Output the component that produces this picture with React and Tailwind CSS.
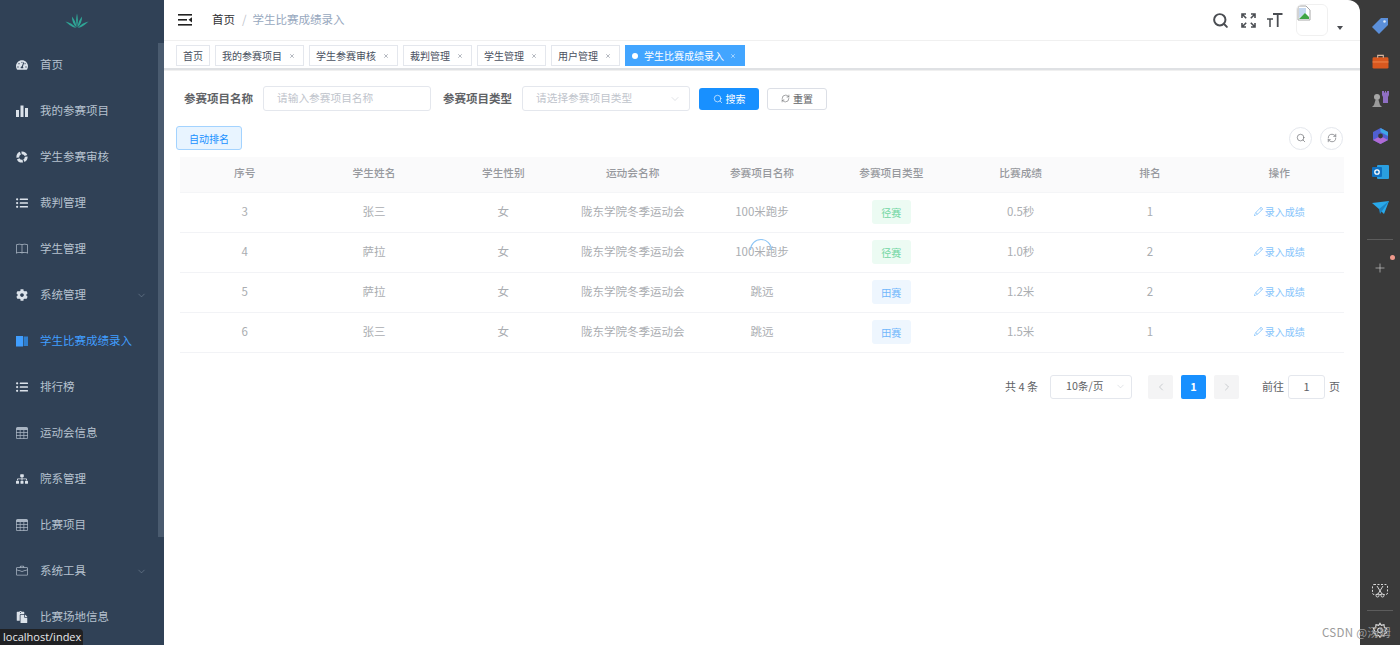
import React from "react";
import { Search, RefreshCw, ChevronDown, ChevronLeft, ChevronRight, Plus, X } from "lucide-react";
import { FaTachometerAlt, FaListUl, FaCog, FaSitemap, FaPaste } from "react-icons/fa";
import { BsBook, BsTable, BsBriefcase, BsPencil } from "react-icons/bs";

const Bars = (p) => (
  <svg {...p} viewBox="0 0 12 12" fill="currentColor"><rect x="0" y="5" width="3" height="7" /><rect x="4.5" y="0.5" width="3" height="11.5" /><rect x="9" y="3" width="3" height="9" /></svg>
);
const Ring = (p) => (
  <svg {...p} viewBox="0 0 12 12" fill="none" stroke="currentColor"><circle cx="6" cy="6" r="4.2" strokeWidth="2.8" strokeDasharray="5.4 1.2" strokeDashoffset="1" /></svg>
);
const ActiveBook = (p) => (
  <svg {...p} viewBox="0 0 12 12"><rect x="0" y="1" width="7" height="10.5" fill="#409eff" /><rect x="7.6" y="1.5" width="4.4" height="9.5" fill="#2f7fd0" /></svg>
);

const menu = [
  ["首页", FaTachometerAlt],
  ["我的参赛项目", Bars],
  ["学生参赛审核", Ring],
  ["裁判管理", FaListUl],
  ["学生管理", BsBook, false, false, true],
  ["系统管理", FaCog, true],
  ["学生比赛成绩录入", ActiveBook, false, true],
  ["排行榜", FaListUl],
  ["运动会信息", BsTable, false, false, true],
  ["院系管理", FaSitemap],
  ["比赛项目", BsTable, false, false, true],
  ["系统工具", BsBriefcase, true, false, true],
  ["比赛场地信息", FaPaste],
];

const tags = ["我的参赛项目", "学生参赛审核", "裁判管理", "学生管理", "用户管理"];
const heads = ["序号", "学生姓名", "学生性别", "运动会名称", "参赛项目名称", "参赛项目类型", "比赛成绩", "排名", "操作"];
const rows = [
  ["3", "张三", "100米跑步", "径赛", "0.5秒", "1"],
  ["4", "萨拉", "100米跑步", "径赛", "1.0秒", "2"],
  ["5", "萨拉", "跳远", "田赛", "1.2米", "2"],
  ["6", "张三", "跳远", "田赛", "1.5米", "1"],
];

function Sidebar() {
  return (
    <aside className="relative w-[164px] h-full shrink-0 bg-[#304156] overflow-hidden">
      <div className="h-[42px] flex items-center justify-center pr-[10px]">
        <svg width="24" height="16" viewBox="0 0 26 16" fill="#2fa596">
          <path d="M13 15 C11.5 9 12 4 13 0 C14 4 14.5 9 13 15Z" />
          <path d="M12.5 15 C9 12 7.5 7 7.5 3 C10 6 12 10 12.5 15Z" />
          <path d="M13.5 15 C17 12 18.5 7 18.5 3 C16 6 14 10 13.5 15Z" />
          <path d="M12 15.5 C7 14.5 3 11 0.5 8.5 C5 9.5 9.5 12 12 15.5Z" />
          <path d="M14 15.5 C19 14.5 23 11 25.5 8.5 C21 9.5 16.5 12 14 15.5Z" />
        </svg>
      </div>
      {menu.map(([label, Icon, arrow, active, dim]) => (
        <div key={label} className={`h-[46px] flex items-center pl-4 pr-4 ${active ? "text-[#409eff]" : "text-[#b6c2cf]"}`}>
          <Icon size={12} width={12} height={12} className={`w-3 h-3 shrink-0 ${active ? "text-[#409eff]" : dim ? "text-[#a9b5c3]" : "text-[#dbe2ea]"}`} />
          <span className="ml-3 text-[11.5px] leading-none whitespace-nowrap">{label}</span>
          {arrow && <ChevronDown size={11} strokeWidth={1} className="ml-auto mr-[1px] text-[#8a99ab]" />}
        </div>
      ))}
      <div className="absolute right-0 top-[43px] w-[6px] h-[494px] bg-[#4a5b6f]" />
      <div className="absolute left-0 bottom-0 h-4 w-[83px] bg-[#202124] text-[#e8eaed] text-[11px] leading-4 pl-[3px] font-['Open_Sans',sans-serif] rounded-tr-sm">localhost/index</div>
    </aside>
  );
}

function Navbar() {
  return (
    <header className="h-[41px] shrink-0 flex items-center border-b border-[#f0f0f0] pl-[14px] pr-[17px]">
      <svg width="14" height="12" viewBox="0 0 14 12" fill="#222" className="shrink-0">
        <rect x="0" y="0" width="14" height="1.6" />
        <rect x="0" y="5" width="9" height="1.6" />
        <rect x="0" y="10" width="14" height="1.6" />
        <path d="M14 3.2 L10.5 5.8 L14 8.4Z" />
      </svg>
      <span className="ml-5 text-[11.5px] text-[#303133]">首页</span>
      <span className="ml-[7px] text-[11.5px] text-[#c0c4cc]">/</span>
      <span className="ml-[6px] text-[11.5px] text-[#97a8be]">学生比赛成绩录入</span>
      <div className="ml-auto flex items-center">
        <Search size={17} strokeWidth={2.8} className="text-[#4a4d52]" />
        <svg width="15" height="15" viewBox="0 0 15 15" fill="none" stroke="#4a4d52" strokeWidth="1.6" className="ml-[12px]">
          <path d="M1 5 V1 H5 M1 1 L5.2 5.2" />
          <path d="M14 5 V1 H10 M14 1 L9.8 5.2" />
          <path d="M1 10 V14 H5 M1 14 L5.2 9.8" />
          <path d="M14 10 V14 H10 M14 14 L9.8 9.8" />
        </svg>
        <svg width="17" height="16" viewBox="0 0 17 16" className="ml-[10px] text-[#4a4d52]" stroke="currentColor" fill="none">
          <path d="M7 2 H16.5 M11.7 2 V15" strokeWidth="1.8" />
          <path d="M1 7 H7 M4 7 V15" strokeWidth="1.5" />
        </svg>
        <div className="ml-[13px] w-8 h-8 rounded-md border border-[#f0f0f0] relative overflow-hidden">
          <svg width="14" height="16" viewBox="0 0 14 16" className="absolute left-0 top-0">
            <path d="M1 1 H9 L13 5 V15 H1Z" fill="#fff" stroke="#a8a8a8" strokeWidth="1" />
            <path d="M2 3 H9 V8 L2 13Z" fill="#c5d8f0" />
            <path d="M2 14 L8 8 L12 12 V14Z" fill="#3fa544" />
          </svg>
        </div>
        <div className="ml-[9px] mt-[16px] w-0 h-0 border-x-[3px] border-x-transparent border-t-[4px] border-t-[#4a4d52]" />
      </div>
    </header>
  );
}

function Tags() {
  return (
    <div className="h-[29px] shrink-0 flex items-start gap-[5px] pl-3 pt-[4px] border-b-2 border-[#dfe1e4] shadow-[0_1px_0_#f0f0f0]">
      <div className="h-[21px] flex items-center px-[6px] border border-[#e4e7ed] text-[10px] text-[#495060]">首页</div>
      {tags.map((t) => (
        <div key={t} className="h-[21px] flex items-center pl-[6px] pr-[8px] border border-[#e4e7ed] text-[10px] text-[#495060]">
          <span>{t}</span>
          <X size={6} strokeWidth={2} className="ml-[7px] text-[#6b7280]" />
        </div>
      ))}
      <div className="h-[21px] flex items-center pl-[7px] pr-[9px] bg-[#42a5ff] text-[10px] text-white">
        <span className="w-[6px] h-[6px] rounded-full bg-white" />
        <span className="ml-[6px]">学生比赛成绩录入</span>
        <X size={6} strokeWidth={2} className="ml-[6px] text-white" />
      </div>
    </div>
  );
}

function Filters() {
  return (
    <div className="flex items-center h-[25px] pl-[20px]">
      <span className="text-[11.5px] font-semibold text-[#606266] w-[79px] whitespace-nowrap">参赛项目名称</span>
      <div className="w-[168px] h-[25px] border border-[#e4e7ed] rounded-[3px] pl-[13px] flex items-center text-[10.7px] text-[#c0c4cc]">请输入参赛项目名称</div>
      <span className="ml-3 text-[11.5px] font-semibold text-[#606266] w-[79px] whitespace-nowrap">参赛项目类型</span>
      <div className="w-[168px] h-[25px] border border-[#e4e7ed] rounded-[3px] pl-[13px] pr-[8px] flex items-center justify-between text-[10.7px] text-[#c0c4cc]">
        请选择参赛项目类型
        <ChevronDown size={12} strokeWidth={1} />
      </div>
      <button className="ml-[9px] w-[60px] h-[22px] rounded-[3px] bg-[#1890ff] text-white text-[10px] flex items-center justify-center gap-[3px]">
        <Search size={10} strokeWidth={1.5} />搜索
      </button>
      <button className="ml-2 w-[60px] h-[22px] rounded-[3px] border border-[#dcdfe6] text-[#606266] text-[10px] flex items-center justify-center gap-[3px]">
        <RefreshCw size={9} strokeWidth={1.5} />重置
      </button>
    </div>
  );
}

function Toolbar() {
  return (
    <div className="flex items-center justify-between h-6 mt-[15px] pl-3 pr-[17px]">
      <button className="w-[66px] h-6 rounded-[3px] bg-[#e8f4ff] border border-[#a3d3ff] text-[#1890ff] text-[10px]">自动排名</button>
      <div className="flex items-center gap-2">
        <span className="w-[23px] h-[23px] rounded-full border border-[#e4e7ed] flex items-center justify-center text-[#606266]"><Search size={10} strokeWidth={1.5} /></span>
        <span className="w-[23px] h-[23px] rounded-full border border-[#e4e7ed] flex items-center justify-center text-[#606266]"><RefreshCw size={10} strokeWidth={1.5} /></span>
      </div>
    </div>
  );
}

function DataTable() {
  return (
    <div className="relative mt-[7px] ml-4 mr-4">
      <table className="w-full table-fixed border-collapse">
        <thead>
          <tr className="h-[35px] bg-[#fafafb] border-b border-[#f4f5f7]">
            {heads.map((h) => (
              <th key={h} className="pb-[3px] text-[10.7px] font-medium text-[#97999e] text-center">{h}</th>
            ))}
          </tr>
        </thead>
        <tbody>
          {rows.map(([id, name, item, type, score, rank]) => (
            <tr key={id} className="h-10 border-b border-[#f2f3f6] text-[11.5px] text-[#aaadb1] text-center">
              <td>{id}</td>
              <td>{name}</td>
              <td>女</td>
              <td>陇东学院冬季运动会</td>
              <td>{item}</td>
              <td>
                <span className={`inline-flex w-[39px] h-6 items-center justify-center rounded-[3px] text-[10px] ${type === "径赛" ? "bg-[#ecfbf3] text-[#6fd6a2]" : "bg-[#eef6fe] text-[#70b7fb]"}`}>{type}</span>
              </td>
              <td>{score}</td>
              <td>{rank}</td>
              <td>
                <span className="inline-flex items-center justify-center text-[10px] text-[#86c4fb]">
                  <BsPencil size={9} className="mr-[2px]" />录入成绩
                </span>
              </td>
            </tr>
          ))}
        </tbody>
      </table>
      <svg width="26" height="26" viewBox="0 0 26 26" className="absolute left-[568px] top-[80px]" fill="none">
        <path d="M2.5 13 A10.5 10.5 0 0 1 23.5 13" stroke="#8cc5f5" strokeWidth="1.1" />
      </svg>
    </div>
  );
}

function Pager() {
  return (
    <div className="mt-[22px] pr-5 flex items-center justify-end h-6 text-[11px] text-[#606266]">
      <span>共 4 条</span>
      <div className="ml-3 w-[82px] h-6 border border-[#e4e7ed] rounded-[3px] pl-[15px] pr-[5px] flex items-center justify-between text-[10.7px]">
        10条/页
        <ChevronDown size={11} strokeWidth={1} className="text-[#c0c4cc]" />
      </div>
      <span className="ml-4 w-[25px] h-6 rounded-[2px] bg-[#f4f4f5] flex items-center justify-center text-[#b8bbc0]"><ChevronLeft size={12} strokeWidth={1.4} /></span>
      <span className="ml-2 w-[25px] h-6 rounded-[2px] bg-[#1890ff] flex items-center justify-center text-white font-bold">1</span>
      <span className="ml-2 w-[25px] h-6 rounded-[2px] bg-[#f4f4f5] flex items-center justify-center text-[#b8bbc0]"><ChevronRight size={12} strokeWidth={1.4} /></span>
      <span className="ml-[23px]">前往</span>
      <span className="ml-1 w-[37px] h-6 border border-[#e4e7ed] rounded-[3px] flex items-center justify-center">1</span>
      <span className="ml-1 w-[11px]">页</span>
    </div>
  );
}

function Rail() {
  return (
    <aside className="relative w-10 h-full shrink-0 bg-[#3a3a3a] flex flex-col items-center">
      <div className="h-[45px] mt-[3px] flex items-center justify-center">
        <svg width="18" height="18" viewBox="0 0 18 18"><path d="M1 10 L10 1 H17 V8 L8 17Z" fill="#5b8fd9" /><circle cx="13.5" cy="4.5" r="1.3" fill="#dce8f8" /></svg>
      </div>
      <div className="h-[37px] -mt-[5px] flex items-center justify-center">
        <svg width="17" height="15" viewBox="0 0 18 16"><rect x="0.5" y="3.5" width="17" height="12" rx="1.5" fill="#d9581f" /><rect x="0.5" y="8" width="17" height="1" fill="#f08a50" /><path d="M6 4 V1.5 H12 V4" fill="none" stroke="#d9b7a0" strokeWidth="1.2" /></svg>
      </div>
      <div className="h-[37px] flex items-center justify-center">
        <svg width="18" height="18" viewBox="0 0 18 18"><circle cx="6" cy="7" r="3" fill="#a6a6a6" /><path d="M1 17 L3 15 L4.5 10 H7.5 L9 15 L11 17Z" fill="#9a9a9a" /><path d="M11 1 H13 V2.5 H14 V1 H15 V2.5 H16 V1 H18 V5 L17 7 V13 H12 V7 L11 5Z" fill="#8f6fc4" /></svg>
      </div>
      <div className="h-[37px] flex items-center justify-center">
        <svg width="17" height="18" viewBox="0 0 17 18"><path d="M8.5 1 L16 5 V13 L8.5 17 L1 13 V5Z" fill="#4f5fd0" /><path d="M8.5 1 L16 5 V9 L8.5 5Z" fill="#3fa7e6" /><path d="M1 13 L8.5 9 L16 13 L8.5 17Z" fill="#b06ad4" /><circle cx="8.5" cy="9" r="2.4" fill="#3a3a3a" /></svg>
      </div>
      <div className="h-[36px] flex items-center justify-center">
        <svg width="17" height="16" viewBox="0 0 17 16"><rect x="5" y="1" width="12" height="14" rx="1" fill="#2a9fe0" /><rect x="0" y="3" width="10" height="10" rx="1" fill="#0f70c0" /><circle cx="5" cy="8" r="2.2" fill="none" stroke="#fff" strokeWidth="1.3" /></svg>
      </div>
      <div className="h-[36px] flex items-center justify-center">
        <svg width="17" height="14" viewBox="0 0 17 14"><path d="M0 2 L17 0 L12 13 L7 8 Z" fill="#29a9ea" /><path d="M7 8 L17 0 L8 13Z" fill="#1c84c4" /></svg>
      </div>
      <div className="mt-[13px] w-[26px] h-px bg-[#5c5c5c]" />
      <div className="relative mt-[20px] h-4 flex items-center justify-center">
        <Plus size={14} strokeWidth={1} className="text-[#e0e0e0]" />
        <span className="absolute -right-[8px] -top-[5px] w-[5px] h-[5px] rounded-full bg-[#f0998c]" />
      </div>
      <div className="mt-auto flex flex-col items-center">
        <svg width="16" height="14" viewBox="0 0 16 14" fill="none" stroke="#d8d8d8" strokeWidth="1">
          <rect x="0.5" y="0.5" width="15" height="10" rx="1.5" strokeDasharray="2 1.5" />
          <path d="M5 2 L10 10 M11 2 L6 10" />
          <circle cx="5.5" cy="11.5" r="1.5" /><circle cx="10.5" cy="11.5" r="1.5" />
        </svg>
        <div className="mt-[12px] w-[26px] h-px bg-[#5c5c5c]" />
        <svg width="16" height="16" viewBox="0 0 24 24" fill="none" stroke="#e0e0e0" strokeWidth="1.6" className="mt-[11px] mb-[7px]">
          <path d="M12 2 L14 5 L18 4 L18.5 8 L22 10 L20 13 L22 16 L18.5 17.5 L18 21 L14 20 L12 23 L10 20 L6 21 L5.5 17.5 L2 16 L4 13 L2 10 L5.5 8 L6 4 L10 5Z" />
          <circle cx="12" cy="12.5" r="3.5" />
        </svg>
      </div>
      <span className="absolute left-[-38px] bottom-[7px] text-[11.5px] leading-3 tracking-[0.3px] text-[#9a9a9a] whitespace-nowrap">CSDN @汤姆</span>
    </aside>
  );
}

export default function App() {
  return (
    <div className="w-[1400px] h-[645px] flex overflow-hidden bg-[#3a3a3a] font-['Noto_Sans_CJK_SC','Noto_Sans',sans-serif]">
      <Sidebar />
      <main className="w-[1196px] h-full bg-white rounded-tr-xl flex flex-col overflow-hidden">
        <Navbar />
        <Tags />
        <div className="pt-[16px]">
          <Filters />
          <Toolbar />
          <DataTable />
          <Pager />
        </div>
      </main>
      <Rail />
    </div>
  );
}
